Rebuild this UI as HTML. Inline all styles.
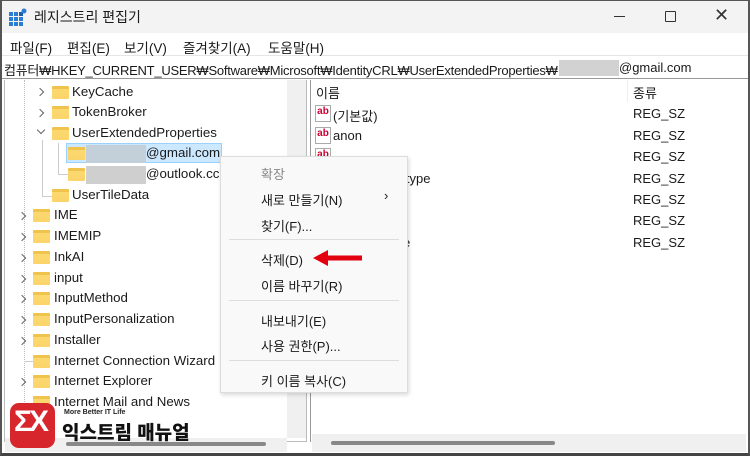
<!DOCTYPE html>
<html><head><meta charset="utf-8"><style>
*{margin:0;padding:0;box-sizing:border-box}
body{width:750px;height:456px;overflow:hidden;background:#fff;font-family:"Liberation Sans","Noto Sans CJK KR",sans-serif;color:#1a1a1a;position:relative;font-size:13px}
.a{position:absolute;white-space:nowrap}
.fold{position:absolute;width:17px;height:13px;background:linear-gradient(#f0c44c 0,#f0c44c 3px,#fbd970 3px,#fbd46a 100%);border-radius:1px}
.chev{position:absolute;width:6px;height:6px;border-right:1px solid #666;border-bottom:1px solid #666;transform:rotate(-45deg)}
.chd{transform:rotate(45deg)}
.ab{position:absolute;width:16px;height:17px;border:1px solid #aaa;background:#fff;font-size:10px;font-weight:bold;color:#c03;line-height:11px;text-align:center}
</style></head><body>
<div class="a" style="left:0;top:0;width:750px;height:456px;border:2px solid #555;border-top:1px solid #555;border-bottom:3px solid #444"></div>
<div class="a" style="left:2px;top:1px;width:746px;height:32px;background:#f3f3f3"></div>
<svg class="a" style="left:9px;top:8px" width="18" height="18"><g fill="#2b7cd3"><rect x="0" y="4" width="4" height="4"/><rect x="5" y="4" width="4" height="4"/><rect x="0" y="9" width="4" height="4"/><rect x="5" y="9" width="4" height="4"/><rect x="10" y="9" width="4" height="4"/><rect x="0" y="14" width="4" height="4"/><rect x="5" y="14" width="4" height="4"/><rect x="10" y="14" width="4" height="4"/><rect x="10" y="4" width="4" height="4" fill="#1b5fa8"/></g><circle cx="15" cy="3" r="2.5" fill="#2b7cd3"/></svg>
<div class="a" style="left:34px;top:7px;font-size:14px">레지스트리 편집기</div>
<div class="a" style="left:614px;top:16px;width:11px;height:1px;background:#333"></div>
<div class="a" style="left:665px;top:11px;width:11px;height:11px;border:1.2px solid #333;border-radius:1px"></div>
<div class="a" style="left:714px;top:5px;font-size:18px;font-weight:300;color:#333">✕</div>
<div class="a" style="left:2px;top:33px;width:746px;height:23px;background:#fff;border-bottom:1px solid #e5e5e5"></div>
<div class="a" style="left:10px;top:37px;font-size:13.5px">파일(F)</div>
<div class="a" style="left:67px;top:37px;font-size:13.5px">편집(E)</div>
<div class="a" style="left:124px;top:37px;font-size:13.5px">보기(V)</div>
<div class="a" style="left:183px;top:37px;font-size:13.5px">즐겨찾기(A)</div>
<div class="a" style="left:268px;top:37px;font-size:13.5px">도움말(H)</div>
<div class="a" style="left:2px;top:57px;width:746px;height:22px;border-bottom:1px solid #999"></div>
<div class="a" style="left:4px;top:60px;font-size:13px;letter-spacing:-0.25px">컴퓨터₩HKEY_CURRENT_USER₩Software₩Microsoft₩IdentityCRL₩UserExtendedProperties₩</div>
<div class="a" style="left:559px;top:60px;width:60px;height:16px;background:#d2d2d2"></div>
<div class="a" style="left:619px;top:60px;font-size:13px">@gmail.com</div>
<div class="a" style="left:4px;top:80px;width:303px;height:362px;border:1px solid #bbb;border-top:none"></div>
<div class="a" style="left:287px;top:80px;width:19px;height:358px;background:#f0f0f0"></div>
<div class="a" style="left:5px;top:438px;width:282px;height:14px;background:#f0f0f0"></div>
<div class="a" style="left:66px;top:442px;width:200px;height:4px;background:#888;border-radius:2px"></div>
<div class="a" style="left:24px;top:80px;border-left:1px dotted #bbb;height:330px"></div>
<div class="a" style="left:42px;top:140px;border-left:1px solid #ccc;height:56px"></div>
<div class="a" style="left:58px;top:143px;border-left:1px solid #ccc;height:32px"></div>
<div class="a" style="left:58px;top:174px;width:10px;border-top:1px solid #ccc"></div>
<div class="a" style="left:42px;top:196px;width:10px;border-top:1px solid #ccc"></div>
<div class="a" style="left:24px;top:361px;width:9px;border-top:1px solid #ccc"></div>
<div class="chev" style="left:37px;top:89px"></div><div class="fold" style="left:52px;top:86px"></div><div class="a" style="left:72px;top:84px;font-size:13.3px">KeyCache</div>
<div class="chev" style="left:37px;top:110px"></div><div class="fold" style="left:52px;top:106px"></div><div class="a" style="left:72px;top:104px;font-size:13.3px">TokenBroker</div>
<div class="chev chd" style="left:38px;top:127px"></div><div class="fold" style="left:52px;top:127px"></div><div class="a" style="left:72px;top:125px;font-size:13.3px">UserExtendedProperties</div>
<div class="a" style="left:66px;top:143px;width:156px;height:20px;background:#cce8ff;border:1px solid #99d1ff"></div>
<div class="fold" style="left:68px;top:147px"></div><div class="a" style="left:86px;top:145px;width:60px;height:18px;background:#c3cfd9"></div><div class="a" style="left:146px;top:145px;font-size:13.3px">@gmail.com</div>
<div class="fold" style="left:68px;top:168px"></div><div class="a" style="left:86px;top:166px;width:60px;height:18px;background:#cfcfcf"></div><div class="a" style="left:146px;top:166px;font-size:13.3px">@outlook.cc</div>
<div class="fold" style="left:52px;top:189px"></div><div class="a" style="left:72px;top:187px;font-size:13.3px">UserTileData</div>
<div class="chev" style="left:19px;top:213px"></div><div class="fold" style="left:33px;top:209px"></div><div class="a" style="left:54px;top:207px;font-size:13.3px">IME</div>
<div class="chev" style="left:19px;top:234px"></div><div class="fold" style="left:33px;top:230px"></div><div class="a" style="left:54px;top:228px;font-size:13.3px">IMEMIP</div>
<div class="chev" style="left:19px;top:255px"></div><div class="fold" style="left:33px;top:251px"></div><div class="a" style="left:54px;top:249px;font-size:13.3px">InkAI</div>
<div class="chev" style="left:19px;top:276px"></div><div class="fold" style="left:33px;top:272px"></div><div class="a" style="left:54px;top:270px;font-size:13.3px">input</div>
<div class="chev" style="left:19px;top:296px"></div><div class="fold" style="left:33px;top:292px"></div><div class="a" style="left:54px;top:290px;font-size:13.3px">InputMethod</div>
<div class="chev" style="left:19px;top:317px"></div><div class="fold" style="left:33px;top:313px"></div><div class="a" style="left:54px;top:311px;font-size:13.3px">InputPersonalization</div>
<div class="chev" style="left:19px;top:338px"></div><div class="fold" style="left:33px;top:334px"></div><div class="a" style="left:54px;top:332px;font-size:13.3px">Installer</div>
<div class="fold" style="left:33px;top:355px"></div><div class="a" style="left:54px;top:353px;font-size:13.3px">Internet Connection Wizard</div>
<div class="chev" style="left:19px;top:379px"></div><div class="fold" style="left:33px;top:375px"></div><div class="a" style="left:54px;top:373px;font-size:13.3px">Internet Explorer</div>
<div class="fold" style="left:33px;top:396px"></div><div class="a" style="left:54px;top:394px;font-size:13.3px">Internet Mail and News</div>
<div class="a" style="left:310px;top:80px;width:437px;height:362px;border-left:1px solid #999"></div>
<div class="a" style="left:312px;top:434px;width:434px;height:18px;background:#f0f0f0"></div>
<div class="a" style="left:331px;top:441px;width:224px;height:4px;background:#888;border-radius:2px"></div>
<div class="a" style="left:627px;top:80px;height:22px;border-left:1px solid #eee"></div>
<div class="a" style="left:316px;top:83px">이름</div>
<div class="a" style="left:633px;top:83px">종류</div>
<div class="ab" style="left:315px;top:105px">ab</div><div class="a" style="left:333px;top:106px">(기본값)</div>
<div class="ab" style="left:315px;top:127px">ab</div><div class="a" style="left:333px;top:128px">anon</div>
<div class="ab" style="left:315px;top:148px">ab</div>
<div class="a" style="left:403px;top:171px">ltype</div>
<div class="a" style="left:403px;top:235px">e</div>
<div class="a" style="left:633px;top:106px">REG_SZ</div>
<div class="a" style="left:633px;top:128px">REG_SZ</div>
<div class="a" style="left:633px;top:149px">REG_SZ</div>
<div class="a" style="left:633px;top:171px">REG_SZ</div>
<div class="a" style="left:633px;top:192px">REG_SZ</div>
<div class="a" style="left:633px;top:213px">REG_SZ</div>
<div class="a" style="left:633px;top:235px">REG_SZ</div>
<div class="a" style="left:220px;top:156px;width:188px;height:237px;background:#f9f9f9;border:1px solid #ddd;box-shadow:1px 2px 4px rgba(0,0,0,.15)"></div>
<div class="a" style="left:261px;top:164px;color:#888">확장</div>
<div class="a" style="left:261px;top:190px">새로 만들기(N)</div>
<div class="a" style="left:384px;top:188px;font-size:13px">›</div>
<div class="a" style="left:261px;top:216px">찾기(F)...</div>
<div class="a" style="left:229px;top:239px;width:170px;border-top:1px solid #ddd"></div>
<div class="a" style="left:261px;top:250px">삭제(D)</div>
<div class="a" style="left:261px;top:276px">이름 바꾸기(R)</div>
<div class="a" style="left:229px;top:300px;width:170px;border-top:1px solid #ddd"></div>
<div class="a" style="left:261px;top:311px">내보내기(E)</div>
<div class="a" style="left:261px;top:336px">사용 권한(P)...</div>
<div class="a" style="left:229px;top:360px;width:170px;border-top:1px solid #ddd"></div>
<div class="a" style="left:261px;top:371px">키 이름 복사(C)</div>
<svg class="a" style="left:312px;top:248px" width="52" height="20"><path d="M1 10 L16 2 L16 7.5 L50 7.5 L50 12.5 L16 12.5 L16 18 Z" fill="#e3000f"/></svg>
<div class="a" style="left:10px;top:403px;width:45px;height:45px;background:#d8262d;border-radius:9px"></div>
<div class="a" style="left:14px;top:405px;font-size:30px;font-weight:bold;color:#fff;letter-spacing:-3px">ΣX</div>
<div class="a" style="left:64px;top:409px;font-size:7px;font-weight:bold;color:#222">More Better IT Life</div>
<div class="a" style="left:62px;top:418px;font-size:19px;font-weight:900;color:#111">익스트림 매뉴얼</div>
</body></html>
